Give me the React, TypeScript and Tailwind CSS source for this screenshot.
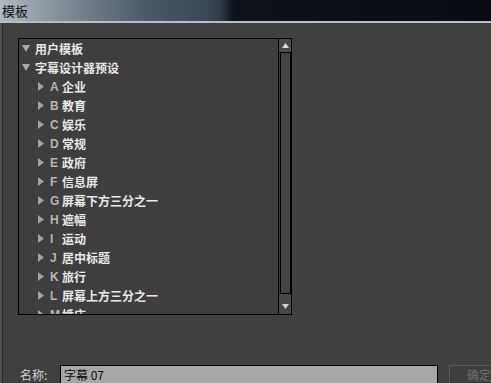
import React from "react";

const FONT = { fontFamily: '"Noto Sans CJK SC", "Noto Sans", sans-serif' };

const items: [string, string][] = [
  ["A", "企业"],
  ["B", "教育"],
  ["C", "娱乐"],
  ["D", "常规"],
  ["E", "政府"],
  ["F", "信息屏"],
  ["G", "屏幕下方三分之一"],
  ["H", "遮幅"],
  ["I", "运动"],
  ["J", "居中标题"],
  ["K", "旅行"],
  ["L", "屏幕上方三分之一"],
  ["M", "婚庆"],
];

function Down() {
  return (
    <svg width="8" height="7" viewBox="0 0 8 7" className="shrink-0">
      <polygon points="0,0 8,0 4,7" fill="#a9a9a9" />
    </svg>
  );
}

function Right() {
  return (
    <svg width="6" height="9" viewBox="0 0 6 9" className="shrink-0">
      <polygon points="0,0 6,4.5 0,9" fill="#a3a3a3" />
    </svg>
  );
}

export default function App() {
  return (
    <div
      className="w-[491px] h-[383px] overflow-hidden flex flex-col bg-[#404040]"
      style={FONT}
    >
      <div className="h-[21px] shrink-0 flex items-center pl-[2px] bg-[linear-gradient(90deg,#b2b9c0_0%,#7c8894_14%,#4b5866_30%,#3a4755_42%,#2e3a47_45%,#0e131b_47.5%,#090d15_100%)]">
        <span className="text-[13px] leading-none text-[#111111]">模板</span>
      </div>
      <div className="h-[2px] shrink-0 bg-[#b9bec3]" />
      <div className="flex-1 flex min-h-0">
        <div className="w-[2px] shrink-0 bg-[#4e4e4e]" />
        <div className="w-px shrink-0 bg-[#2a2a2a]" />
        <div className="flex-1 flex flex-col pl-[15px] pt-[15px]">
          <div className="w-[274px] h-[277px] flex border border-black bg-[#3e3e3e]">
            <div className="flex-1 overflow-hidden flex flex-col">
              <div className="h-[19px] shrink-0 flex items-center pl-[3px] gap-[5px]">
                <Down />
                <span className="text-[12px] font-bold text-[#e6e6e6] leading-none">用户模板</span>
              </div>
              <div className="h-[19px] shrink-0 flex items-center pl-[3px] gap-[5px]">
                <Down />
                <span className="text-[12px] font-bold text-[#e6e6e6] leading-none">字幕设计器预设</span>
              </div>
              {items.map(([l, t]) => (
                <div key={l} className="h-[19px] shrink-0 flex items-center pl-[19px]">
                  <Right />
                  <span
                    className="w-[12px] ml-[6px] text-[12px] font-bold text-[#b5b5b5] leading-none"
                    style={{ fontFamily: '"Liberation Sans", Arial, sans-serif' }}
                  >
                    {l}
                  </span>
                  <span className="text-[12px] font-bold text-[#e8e8e8] leading-none">{t}</span>
                </div>
              ))}
            </div>
            <div className="w-[13px] shrink-0 flex flex-col border-l border-black bg-[#3a3a3a]">
              <div className="h-[14px] shrink-0 flex items-center justify-center bg-[#4a4a4a] border-b border-black">
                <svg width="7" height="5" viewBox="0 0 7 5">
                  <polygon points="0,5 7,5 3.5,0" fill="#dcdcdc" />
                </svg>
              </div>
              <div className="flex-1 ml-px border-x border-b border-black bg-[#444444]" />
              <div className="h-[20px] shrink-0 flex items-end justify-center pb-[5px] bg-[#474747]">
                <svg width="7" height="5" viewBox="0 0 7 5">
                  <polygon points="0,0 7,0 3.5,5" fill="#cfcfcf" />
                </svg>
              </div>
            </div>
          </div>
          <div className="flex-1" />
          <div className="h-[20px] flex items-center -mb-[2px]">
            <span className="w-[42px] pl-[2px] text-[12px] text-[#d2d2d2] leading-none">名称:</span>
            <div className="w-[378px] h-full shrink-0 flex items-center pl-[3px] border border-black bg-[#a7a7a7]">
              <span className="text-[12px] text-[#0a0a0a] leading-none">字幕 07</span>
            </div>
            <div className="ml-[11px] w-[50px] h-full shrink-0 flex items-center pl-[17px] border border-[#5a5a5a] bg-[#3e3e3e]">
              <span className="text-[12px] text-[#6e6e6e] leading-none whitespace-nowrap">确定</span>
            </div>
          </div>
        </div>
      </div>
    </div>
  );
}
